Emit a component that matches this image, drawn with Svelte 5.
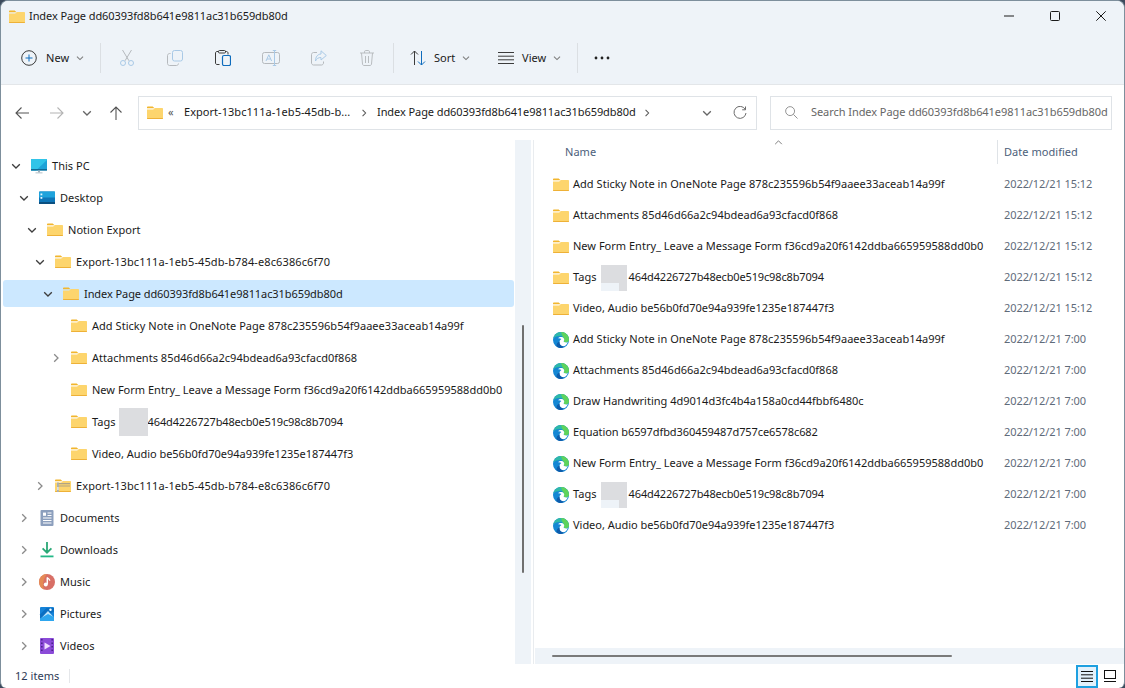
<script>
  const tree = [
    { depth: 0, chev: 'down', icon: 'pc', label: 'This PC' },
    { depth: 1, chev: 'down', icon: 'desktop', label: 'Desktop' },
    { depth: 2, chev: 'down', icon: 'folder', label: 'Notion Export' },
    { depth: 3, chev: 'down', icon: 'folder', label: 'Export-13bc111a-1eb5-45db-b784-e8c6386c6f70', ls: 0.11 },
    { depth: 4, chev: 'down', icon: 'folder', label: 'Index Page dd60393fd8b641e9811ac31b659db80d', selected: true, ls: -0.08 },
    { depth: 5, chev: '', icon: 'folder', label: 'Add Sticky Note in OneNote Page 878c235596b54f9aaee33aceab14a99f' },
    { depth: 5, chev: 'right', icon: 'folder', label: 'Attachments 85d46d66a2c94bdead6a93cfacd0f868', ls: 0.02 },
    { depth: 5, chev: '', icon: 'folder', label: 'New Form Entry_ Leave a Message Form f36cd9a20f6142ddba665959588dd0b0', ls: 0.01 },
    { depth: 5, chev: '', icon: 'folder', label: 'Tags', blur: '464d4226727b48ecb0e519c98c8b7094' },
    { depth: 5, chev: '', icon: 'folder', label: 'Video, Audio be56b0fd70e94a939fe1235e187447f3', ls: -0.03 },
    { depth: 3, chev: 'right', icon: 'zip', label: 'Export-13bc111a-1eb5-45db-b784-e8c6386c6f70', ls: 0.11 },
    { depth: 1, chev: 'right', icon: 'docs', label: 'Documents' },
    { depth: 1, chev: 'right', icon: 'down', label: 'Downloads' },
    { depth: 1, chev: 'right', icon: 'music', label: 'Music' },
    { depth: 1, chev: 'right', icon: 'pics', label: 'Pictures' },
    { depth: 1, chev: 'right', icon: 'video', label: 'Videos' }
  ];
  const files = [
    { icon: 'folder', label: 'Add Sticky Note in OneNote Page 878c235596b54f9aaee33aceab14a99f', date: '2022/12/21 15:12' },
    { icon: 'folder', label: 'Attachments 85d46d66a2c94bdead6a93cfacd0f868', date: '2022/12/21 15:12', ls: 0.02 },
    { icon: 'folder', label: 'New Form Entry_ Leave a Message Form f36cd9a20f6142ddba665959588dd0b0', date: '2022/12/21 15:12', ls: 0.01 },
    { icon: 'folder', label: 'Tags', blur: '464d4226727b48ecb0e519c98c8b7094', date: '2022/12/21 15:12' },
    { icon: 'folder', label: 'Video, Audio be56b0fd70e94a939fe1235e187447f3', date: '2022/12/21 15:12', ls: -0.03 },
    { icon: 'edge', label: 'Add Sticky Note in OneNote Page 878c235596b54f9aaee33aceab14a99f', date: '2022/12/21 7:00' },
    { icon: 'edge', label: 'Attachments 85d46d66a2c94bdead6a93cfacd0f868', date: '2022/12/21 7:00', ls: 0.02 },
    { icon: 'edge', label: 'Draw Handwriting 4d9014d3fc4b4a158a0cd44fbbf6480c', date: '2022/12/21 7:00', ls: 0 },
    { icon: 'edge', label: 'Equation b6597dfbd360459487d757ce6578c682', date: '2022/12/21 7:00', ls: -0.08 },
    { icon: 'edge', label: 'New Form Entry_ Leave a Message Form f36cd9a20f6142ddba665959588dd0b0', date: '2022/12/21 7:00', ls: 0.01 },
    { icon: 'edge', label: 'Tags', blur: '464d4226727b48ecb0e519c98c8b7094', date: '2022/12/21 7:00' },
    { icon: 'edge', label: 'Video, Audio be56b0fd70e94a939fe1235e187447f3', date: '2022/12/21 7:00', ls: -0.03 }
  ];
</script>

{#snippet chevron(dir, cls = 'chev')}
  <svg class={cls} viewBox="0 0 10 10" width="10" height="10" aria-hidden="true">
    {#if dir === 'down'}
      <path d="M1.2 3.2 5 7 8.8 3.2" fill="none" stroke="currentColor" stroke-width="1.3" />
    {:else if dir === 'right'}
      <path d="M3.2 1.2 7 5 3.2 8.8" fill="none" stroke="currentColor" stroke-width="1.3" />
    {/if}
  </svg>
{/snippet}

{#snippet icon(name)}
  <svg class="ico" viewBox="0 0 16 16" width="16" height="16" aria-hidden="true">
    {#if name === 'folder' || name === 'zip'}
      <path d="M0 2.6C0 2 .5 1.6 1 1.6h4.2c.4 0 .7.1 1 .4L7.6 3.3H0z" fill="#f2b62e" />
      <path d="M0 4.4h6.2l1.7-1.3H15c.6 0 1 .4 1 1V13c0 .6-.4 1-1 1H1c-.6 0-1-.4-1-1z" fill="#fdd56d" />
      <path d="M0 13h16c0 .6-.4 1-1 1H1c-.6 0-1-.4-1-1z" fill="#eeb137" />
      {#if name === 'zip'}
        <path d="M3 5h12v1.2H3zM3 7.4h12v1.2H3z" fill="#8f8f8f" opacity=".7" />
        <rect x="2" y="4.5" width="1.8" height="9.5" fill="#a8b0b5" />
        <rect x="2.3" y="9" width="1.2" height="3" fill="#f4f4f4" />
      {/if}
    {:else if name === 'pc'}
      <rect x="-1" y="1" width="18" height="11.5" rx="1" fill="#1fa3d7" />
      <path d="M-1 12.5V2c0-.6.4-1 1-1h17L5 12.5z" fill="#31c4e8" />
      <rect x="-1" y="11" width="18" height="1.5" fill="#106b96" />
      <rect x="7" y="12.5" width="2" height="2" fill="#9fb0ba" />
      <rect x="4.5" y="14.3" width="7" height="1.1" fill="#b8c5cc" />
    {:else if name === 'desktop'}
      <rect x="0" y="1.500" width="16" height="12.500" rx="1" fill="#0f76b8" />
      <path d="M0 2.300C0 1.800.3 1.500.8 1.500H16V7.500H0z" fill="#1fa3dc" />
      <rect x="0" y="12" width="16" height="2" fill="#0b4f80" />
      <rect x="1.5" y="3.5" width="1.8" height="1.8" fill="#e8f7ff" />
      <rect x="1.5" y="7" width="1.8" height="1.8" fill="#e8f7ff" />
    {:else if name === 'docs'}
      <rect x="1.5" y="0" width="13" height="16" rx="1" fill="#8c9fbd" />
      <path d="M8.5 3h4M8.5 5.5h4M4 8h8.5M4 10.5h8.5M4 13h8.5" stroke="#fff" stroke-width="1" />
      <rect x="4" y="2.6" width="3" height="3.2" fill="#fff" />
    {:else if name === 'down'}
      <path d="M8 0v10.5M3.6 6.3 8 10.7l4.4-4.4" fill="none" stroke="#2aa876" stroke-width="1.8" />
      <rect x="1.5" y="13.5" width="13" height="1.8" fill="#24b887" />
    {:else if name === 'music'}
      <circle cx="8" cy="8" r="8" fill="#d86f66" />
      <path d="M0 8a8 8 0 0 1 8-8c-3 4-5 9-3 15.400A8 8 0 0 1 0 8z" fill="#e58a55" />
      <path d="M8.300 3.500v6.800" stroke="#fff" stroke-width="1.500" fill="none" />
      <path d="M8.300 3.500c1 1.500 2.500 1.500 2.500 3.300" stroke="#fff" stroke-width="1.200" fill="none" />
      <circle cx="6.800" cy="10.500" r="2" fill="#fff" />
    {:else if name === 'pics'}
      <rect x="1" y="1" width="14" height="14" rx="1" fill="#1583d8" />
      <path d="M1 14V8.500L7.500 2h7.500v3.500z" fill="#0b6fc2" />
      <path d="M1.500 13 9 5l5.500 6v3.500H2z" fill="#bfe5fb" />
      <path d="M1 15v-2.500L9 8l6 3v4z" fill="#2ea6ee" />
      <circle cx="11.500" cy="3.800" r="1.200" fill="#fff" />
    {:else if name === 'video'}
      <rect x="1" y="0" width="14" height="16" rx="1" fill="#8b4bd8" />
      <path d="M2.200 1h1.300v1.500H2.200zM2.200 4.500h1.300V6H2.200zM2.200 8h1.300v1.500H2.200zM2.200 11.500h1.300V13H2.200zM12.500 1h1.300v1.500h-1.300zM12.500 4.500h1.300V6h-1.300zM12.500 8h1.300v1.500h-1.300zM12.500 11.500h1.300V13h-1.300z" fill="#3d1a7a" />
      <path d="M5.500 4.500 11.500 8l-6 3.500z" fill="#f0dcff" />
    {:else if name === 'edge'}
      <circle cx="8" cy="8" r="8" fill="#1487d4" />
      <path d="M.3 6.500C1.100 2.700 4.400 0 8 0c4.400 0 8 3.300 8 7.500 0 1.700-1.300 2.900-3 2.900-1.300 0-2.300-.4-2.300-1.100 0-.5.500-.6.500-1.700C11.200 5.300 9.400 4 7.300 4 4.300 4 1.600 4.800.3 6.500z" fill="#2fb9a8" />
      <path d="M8 0c4.400 0 8 3.300 8 7.500 0 1.700-1.300 2.900-3 2.900-1.300 0-2.300-.4-2.300-1.100 0-.5.500-.6.500-1.700 0-1.200-.5-2.200-1.400-2.900z" fill="#5fd35c" />
      <path d="M5 6.300C6.500 4.700 9.700 4.500 10.900 6.500c.6 1.100.3 2-.2 2.600-.2.300 0 .9 1.300 1.200 1 .2 2 .1 2.900-.4-.9 2.700-3 4.300-4.700 4.300-2.200 0-3.700-1.400-3.800-3.300-.1-1.700.7-3 2-3.800C7.300 6.300 6 6 5 6.300z" fill="#fff" />
      <path d="M6.500 9.500c-.3 2.800 1.500 4.800 4.400 5.200C9.900 15.600 9 16 8 16c-2 0-3.500-.6-4.500-1.500C3.300 12 4.500 10.300 6.500 9.500z" fill="#0d5cab" />
    {/if}
  </svg>
{/snippet}

{#snippet blurred()}
  <span class="blur"><span class="blur-part"></span></span>
{/snippet}

<div class="window">
  <header class="titlebar">
    <span class="title-icon">{@render icon('folder')}</span>
    <span class="title txt tight">Index Page dd60393fd8b641e9811ac31b659db80d</span>
    <div class="controls">
      <button class="ctl" aria-label="Minimize"><svg viewBox="0 0 10 10" width="10" height="10"><path d="M0 5h10" stroke="#1a1a1a" /></svg></button>
      <button class="ctl" aria-label="Maximize"><svg viewBox="0 0 10 10" width="10" height="10"><rect x=".5" y=".5" width="9" height="9" rx="1" fill="none" stroke="#1a1a1a" /></svg></button>
      <button class="ctl" aria-label="Close"><svg viewBox="0 0 10 10" width="10" height="10"><path d="M.3.300 9.700 9.700M9.700.300.300 9.700" stroke="#1a1a1a" /></svg></button>
    </div>
  </header>

  <div class="toolbar">
    <button class="tool new">
      <svg viewBox="0 0 16 16" width="16" height="16"><circle cx="8" cy="8" r="7.300" fill="none" stroke="#3b3b3b" /><path d="M8 4.500v7M4.500 8h7" stroke="#0f6cbd" /></svg>
      <span class="txt">New</span>
      {@render chevron('down', 'mini')}
    </button>
    <span class="sep"></span>
    <button class="tool square" aria-label="Cut">
      <svg viewBox="0 0 16 16" width="16" height="16" fill="none" stroke="#a9c9e6"><path d="M3.500 0 10 10.800M12.500 0 6 10.800" stroke="#b5b9bd" /><circle cx="4" cy="13" r="2.500" /><circle cx="12" cy="13" r="2.500" /></svg>
    </button>
    <button class="tool square" aria-label="Copy">
      <svg viewBox="0 0 16 16" width="16" height="16" fill="none"><rect x="5.500" y=".5" width="10" height="10.500" rx="2" stroke="#a9c9e6" /><path d="M3.500 3.500H2.500c-1 0-2 1-2 2v8c0 1 1 2 2 2h7c1 0 2-1 2-2" stroke="#b5b9bd" /></svg>
    </button>
    <button class="tool square" aria-label="Paste">
      <svg viewBox="0 0 16 16" width="16" height="16" fill="none"><path d="M4.500 14.500H2c-.8 0-1.500-.7-1.500-1.500V3c0-.8.7-1.500 1.500-1.500h1.500M10 1.500h1.500c.8 0 1.500.7 1.500 1.500v1.500" stroke="#3b3b3b" /><rect x="3.500" y=".5" width="7" height="2.500" rx="1" stroke="#3b3b3b" /><rect x="7.500" y="5.500" width="8" height="10" rx="1.500" stroke="#0f6cbd" stroke-width="1.200" /></svg>
    </button>
    <button class="tool square" aria-label="Rename">
      <svg viewBox="0 0 18 16" width="18" height="16" fill="none"><rect x=".5" y="2.500" width="17" height="11" rx="2" stroke="#b5b9bd" /><path d="M4 11 6.800 4.800 9.600 11M5 9h3.600" stroke="#a9c9e6" /><path d="M12.500 .5v15M10.800 .5h3.400M10.800 15.500h3.400" stroke="#a9c9e6" /></svg>
    </button>
    <button class="tool square" aria-label="Share">
      <svg viewBox="0 0 16 16" width="16" height="16" fill="none"><path d="M6 2.500H2.500c-1 0-2 1-2 2v8.500c0 1 1 2 2 2h8c1 0 2-1 2-2v-1.500" stroke="#b5b9bd" /><path d="M10 .8 15.300 5.500 10 10V7.500C7.500 7.500 5.500 8.500 4.500 11c0-4 2-6.800 5.500-7z" stroke="#a9c9e6" /></svg>
    </button>
    <button class="tool square" aria-label="Delete">
      <svg viewBox="0 0 16 16" width="16" height="16" fill="none" stroke="#b9bdc0"><path d="M1 3h14M5.500 3V1.800c0-.7.500-1.300 1.200-1.300h2.600c.7 0 1.200.6 1.200 1.300V3M2.500 3l1 11c0 .8.700 1.500 1.500 1.500h6c.8 0 1.500-.7 1.500-1.500l1-11M6.500 6v7M9.500 6v7" /></svg>
    </button>
    <span class="sep second"></span>
    <button class="tool sort">
      <svg viewBox="0 0 16 16" width="16" height="16" fill="none"><path d="M4.500 15V1M1 4.500 4.500 1 8 4.500" stroke="#3b3b3b" /><path d="M11.500 1v14M8 11.500 11.500 15 15 11.500" stroke="#0f6cbd" /></svg>
      <span class="txt">Sort</span>
      {@render chevron('down', 'mini')}
    </button>
    <button class="tool view">
      <svg viewBox="0 0 16 12" width="16" height="12" fill="none" stroke="#3b3b3b"><path d="M0 .5h16M0 4.200h16M0 7.800h16M0 11.500h16" /></svg>
      <span class="txt">View</span>
      {@render chevron('down', 'mini')}
    </button>
    <span class="sep third"></span>
    <button class="tool more" aria-label="More"><svg viewBox="0 0 16 4" width="16" height="4"><circle cx="2" cy="2" r="1.400" fill="#222" /><circle cx="8" cy="2" r="1.400" fill="#222" /><circle cx="14" cy="2" r="1.400" fill="#222" /></svg></button>
  </div>

  <div class="addressbar">
    <nav class="nav">
      <button class="navbtn back" aria-label="Back"><svg viewBox="0 0 14 14" width="14" height="14" fill="none" stroke="#555"><path d="M14 7H1M6.500 1.500 1 7l5.500 5.500" stroke-width="1.100" /></svg></button>
      <button class="navbtn fwd" aria-label="Forward"><svg viewBox="0 0 14 14" width="14" height="14" fill="none" stroke="#b4b4b4"><path d="M0 7h13M7.500 1.500 13 7l-5.500 5.500" stroke-width="1.100" /></svg></button>
      <button class="navbtn small" aria-label="Recent">{@render chevron('down', 'navchev')}</button>
      <button class="navbtn up" aria-label="Up"><svg viewBox="0 0 14 14" width="14" height="14" fill="none" stroke="#555"><path d="M7 14V1M1.500 6.500 7 1l5.500 5.500" stroke-width="1.100" /></svg></button>
    </nav>
    <div class="path">
      <span class="path-icon">{@render icon('folder')}</span>
      <span class="crumb-more txt">«</span>
      <span class="crumb first txt">Export-13bc111a-1eb5-45db-b...</span>
      <span class="crumb-sep">{@render chevron('right', 'mini dark')}</span>
      <span class="crumb txt tight">Index Page dd60393fd8b641e9811ac31b659db80d</span>
      <span class="crumb-sep last">{@render chevron('right', 'mini dark')}</span>
      <span class="spacer"></span>
      {@render chevron('down', 'pathchev')}
      <svg class="refresh" viewBox="0 0 14 14" width="14" height="14" fill="none" stroke="#6b6b6b"><path d="M12.300 3.500A6 6 0 1 0 13 7" /><path d="M12.500 .5v3.300H9.200" /></svg>
    </div>
    <div class="search">
      <svg viewBox="0 0 14 14" width="13" height="13" fill="none" stroke="#8a8a8a"><circle cx="5.500" cy="5.500" r="4.800" /><path d="m9 9 4.500 4.500" /></svg>
      <span class="search-text txt">Search Index Page dd60393fd8b641e9811ac31b659db80d</span>
    </div>
  </div>

  <main class="main">
    <aside class="tree">
      {#each tree as row}
        <div class="tree-row" class:selected={row.selected} style="padding-left: {row.depth * 8}px">
          <span class="chev-slot" class:muted={row.chev === 'right'}>{@render chevron(row.chev)}</span>
          {@render icon(row.icon)}
          <span class="label txt" style="letter-spacing: {row.ls ?? 0.04}px">{row.label}{#if row.blur}{@render blurred()}<span class="hex">{row.blur}</span>{/if}</span>
        </div>
      {/each}
    </aside>
    <div class="tree-scroll"><span class="thumb-v"></span></div>
    <section class="list">
      <div class="header">
        <span class="col-name txt">Name</span>
        <svg class="sort-arrow" viewBox="0 0 10 6" width="9" height="5" fill="none" stroke="#666"><path d="M1 5 5 1l4 4" /></svg>
        <span class="col-sep"></span>
        <span class="col-date txt">Date modified</span>
      </div>
      <div class="rows">
        {#each files as f}
          <div class="file-row">
            {@render icon(f.icon)}
            <span class="file-name txt" style="letter-spacing: {f.ls ?? 0.04}px">{f.label}{#if f.blur}{@render blurred()}<span class="hex">{f.blur}</span>{/if}</span>
            <span class="file-date txt">{f.date}</span>
          </div>
        {/each}
      </div>
      <div class="hscroll"><span class="thumb-h"></span></div>
    </section>
  </main>

  <footer class="status">
    <span class="count txt">12 items</span>
    <span class="status-sep"></span>
    <span class="spacer"></span>
    <button class="viewbtn active" aria-label="Details view"><svg viewBox="0 0 12 11" width="12" height="11" fill="none" stroke="#111"><path d="M0 .5h12M0 3.800h12M0 7.200h12M0 10.500h12" /></svg></button>
    <button class="viewbtn" aria-label="Large icons"><svg viewBox="0 0 12 12" width="12" height="12" fill="none" stroke="#111"><rect x=".5" y=".5" width="11" height="8" /><path d="M0 11.500h12" /></svg></button>
  </footer>
</div>

<style>
  :global(body) {
    margin: 0;
    background: #3c4a5c;
    overflow: hidden;
  }
  .window {
    width: 1125px;
    height: 688px;
    box-sizing: border-box;
    display: flex;
    flex-direction: column;
    background: #fff;
    border: 1px solid #7d8f9c;
    border-bottom: 0;
    border-radius: 8px 8px 6px 6px;
    overflow: hidden;
    font-family: "Noto Sans", "Open Sans", sans-serif;
    font-size: 11px;
    letter-spacing: 0.04px;
    color: #1a1a1a;
  }
  .txt { padding-bottom: 2px; }
  .tight { letter-spacing: -0.08px; }
  .hex { letter-spacing: -0.15px; }
  button {
    font: inherit;
    letter-spacing: inherit;
    color: inherit;
    background: none;
    border: 0;
    padding: 0;
    display: flex;
    align-items: center;
    justify-content: center;
  }
  svg { display: block; flex: none; }
  .spacer { flex: 1; }

  .titlebar {
    height: 31px;
    flex: none;
    display: flex;
    align-items: center;
    padding-left: 8px;
    background: #eef3f8;
  }
  .title-icon { width: 20px; }
  .title { flex: 1; }
  .controls { display: flex; align-self: flex-start; }
  .ctl { width: 46px; height: 29px; }

  .toolbar {
    height: 52px;
    flex: none;
    display: flex;
    align-items: center;
    background: #eef3f8;
    border-bottom: 1px solid #e3e6e9;
    color: #1a1a1a;
  }
  .tool { gap: 9px; height: 32px; }
  .new { width: 99px; padding-left: 20px; box-sizing: border-box; justify-content: flex-start; }
  .new :global(.mini) { margin-left: -2px; }
  .sep { width: 1px; height: 30px; background: #dbdfe3; flex: none; }
  .square { width: 48px; }
  .sep:not(.second):not(.third) + .square { margin-left: 2px; }
  .second { margin-left: 2px; }
  .sort { width: 85px; gap: 8px; padding-left: 16px; box-sizing: border-box; justify-content: flex-start; }
  .view { width: 98px; gap: 8px; padding-left: 19px; box-sizing: border-box; justify-content: flex-start; }
  .sort :global(.mini), .view :global(.mini) { margin-left: -1px; }
  .more { width: 48px; }
  :global(.mini) { width: 8px; height: 8px; color: #7c7c7c; }
  :global(.mini.dark) { color: #555; }

  .addressbar {
    height: 55px;
    flex: none;
    display: flex;
    align-items: center;
    box-sizing: border-box;
  }
  .nav { display: flex; width: 137px; padding-left: 5px; box-sizing: border-box; }
  .navbtn { height: 32px; }
  .back { width: 32px; }
  .fwd { width: 38px; }
  .navbtn.small { width: 22px; }
  .up { width: 36px; margin-right: -4px; }
  :global(.navchev) { color: #666; }
  .path, .search {
    height: 34px;
    box-sizing: border-box;
    border: 1px solid #dfe3e7;
    background: #fff;
    display: flex;
    align-items: center;
  }
  .path { width: 619px; padding-left: 8px; padding-right: 9px; margin-right: 13px; }
  .path-icon { width: 21px; }
  .crumb-more { width: 16px; color: #555; }
  .crumb { white-space: nowrap; }
  .crumb.first { width: 176px; }
  .crumb-sep { width: 17px; }
  .crumb-sep.last { margin-left: 7px; }
  :global(.pathchev) { color: #666; margin-right: 21px; }
  .search { width: 342px; padding-left: 14px; color: #666; }
  .search-text { margin-left: 13px; white-space: nowrap; letter-spacing: -0.06px; }

  .main { flex: 1; min-height: 0; display: flex; }
  .tree {
    width: 514px;
    flex: none;
    box-sizing: border-box;
    padding: 10px 0 0 2px;
  }
  .tree-row {
    height: 32px;
    box-sizing: border-box;
    display: flex;
    align-items: center;
    position: relative;
    white-space: nowrap;
  }
  .tree-row.selected::before {
    content: "";
    position: absolute;
    inset: 2px 1px 3px 0;
    background: #cce8ff;
    border-radius: 3px;
  }
  .tree-row > * { position: relative; }
  .chev-slot { width: 28px; flex: none; display: flex; padding-left: 8px; box-sizing: border-box; color: #3d3d3d; }
  .chev-slot.muted { color: #8a8a8a; }
  .label, .file-name { margin-left: 5px; display: inline-flex; align-items: center; white-space: nowrap; }
  .blur {
    width: 29px;
    height: 28px;
    margin: 2px 0 0 3px;
    background: #dcdde0;
    display: inline-block;
    position: relative;
    flex: none;
  }
  .blur-part { display: none; }

  .tree-scroll {
    width: 16px;
    flex: none;
    background: #eef3f8;
    position: relative;
  }
  .thumb-v {
    position: absolute;
    left: 7px;
    top: 185px;
    width: 2px;
    height: 248px;
    background: #6f6f6f;
    border-radius: 1px;
  }
  .list {
    flex: 1;
    min-width: 0;
    display: flex;
    flex-direction: column;
    margin-left: 2px;
    border-left: 1px solid #e9ecef;
    padding-left: 1px;
  }
  .header {
    height: 24px;
    flex: none;
    display: flex;
    align-items: center;
    color: #4c607a;
    position: relative;
    padding-left: 30px;
  }
  .col-name { flex: 1; }
  .sort-arrow { position: absolute; left: 239px; top: 0; }
  .col-sep { width: 1px; height: 24px; background: #dfe3e7; margin-right: 6px; }
  .col-date { width: 120px; }
  .rows { flex: 1; min-height: 0; padding-top: 5px; padding-left: 18px; }
  .file-row { height: 31px; display: flex; align-items: center; white-space: nowrap; }
  .file-name { width: 426px; flex: none; margin-left: 4px; }
  .file-date { color: #5f6b7a; margin-left: 5px; letter-spacing: -0.08px; }
  .file-name .blur { width: 26px; height: 26px; margin-left: 4px; margin-right: 2px; }
  .file-name .blur-part {
    display: block;
    position: absolute;
    left: 0;
    bottom: 0;
    width: 18px;
    height: 8px;
    background: #eef3f8;
  }
  .hscroll { height: 16px; flex: none; background: #eef3f8; position: relative; }
  .thumb-h {
    position: absolute;
    left: 17px;
    top: 7px;
    width: 400px;
    height: 2px;
    background: #7a7a7a;
    border-radius: 1px;
  }

  .status {
    height: 24px;
    flex: none;
    display: flex;
    align-items: center;
    padding-left: 14px;
    padding-right: 4px;
    color: #2d3a55;
  }
  .status-sep { width: 1px; height: 14px; background: #e5e7ea; margin-left: 10px; }
  .viewbtn { width: 20px; height: 20px; margin-left: 2px; }
  .viewbtn.active {
    width: 22px;
    height: 23px;
    box-sizing: border-box;
    border: 2px solid #1ea0e0;
    background: #e3f1fb;
  }
</style>
